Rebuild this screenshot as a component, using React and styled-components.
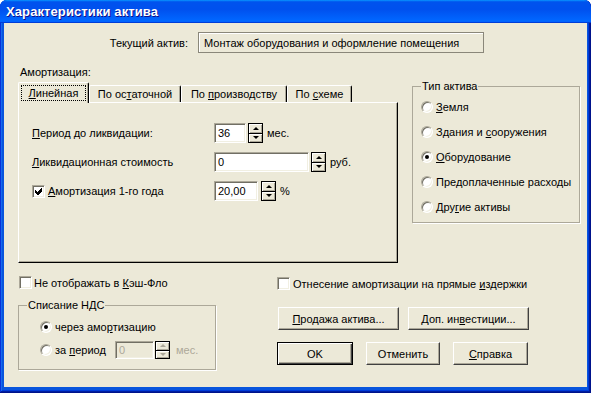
import React from 'react';
import styled, { createGlobalStyle, css } from 'styled-components';

const GlobalStyle = createGlobalStyle`
  html, body {
    margin: 0;
    padding: 0;
    background: #ffffff;
  }
  body {
    font-family: "Liberation Sans", Arial, sans-serif;
    font-size: 11px;
    color: #000;
  }
`;

const Window = styled.div`
  width: 591px;
  height: 393px;
  box-sizing: border-box;
  display: flex;
  flex-direction: column;
  border-radius: 7px 7px 0 0;
  overflow: hidden;
  background: #0855dd;
  box-shadow: inset -1px -1px #00138c, inset 1px 1px #0831d9,
    inset -2px -2px #001ea0, inset 2px 2px #166aee,
    inset -3px -3px #003bda, inset 3px 3px #0855dd;
`;

const TitleBar = styled.div`
  flex: none;
  height: 23px;
  display: flex;
  align-items: center;
  padding-left: 6px;
  background: linear-gradient(180deg, #0997ff, #0053ee 8%, #0050ee 40%, #0066ff 88%, #0066ff 93%, #005bff 95%, #003dd7 96%, #003dd7);
  color: #fff;
  font-size: 13px;
  font-weight: bold;
  letter-spacing: 0.1px;
  text-shadow: 1px 1px #0f1089;
`;

const Body = styled.div`
  flex: 1;
  margin: 0 4px 6px;
  background: #ece9d8;
  display: flex;
  flex-direction: column;
`;

const Key = styled.span`
  text-decoration: underline;
`;

const CurrentRow = styled.div`
  display: flex;
  align-items: center;
  gap: 10px;
  height: 21px;
  margin: 9px 0 0 104px;
`;

const CurrentLabel = styled.span`
  width: 80px;
  text-align: right;
`;

const ReadBox = styled.div`
  width: 286px;
  height: 21px;
  box-sizing: border-box;
  display: flex;
  align-items: center;
  padding-left: 5px;
  border: 1px solid #8a877a;
  box-shadow: inset 1px 1px #fff;
`;

const MainRow = styled.div`
  display: flex;
  gap: 14px;
  margin-left: 14px;
`;

const Column = styled.div`
  display: flex;
  flex-direction: column;
  width: ${p => p.$w}px;
  margin-left: ${p => p.$ml || 0}px;
`;

const SectionLabel = styled.div`
  line-height: 13px;
  margin: 13px 0 0 2px;
`;

const TabBar = styled.div`
  display: flex;
  align-items: flex-end;
  height: 20px;
  margin-top: 3px;
  position: relative;
  z-index: 1;
`;

const Tab = styled.div`
  box-sizing: border-box;
  width: ${p => p.$w}px;
  height: 17px;
  display: flex;
  align-items: center;
  justify-content: center;
  background: #ece9d8;
  border-left: 1px solid #fff;
  border-top: 1px solid #fff;
  border-right: 1px solid #000;
  border-radius: 2px 2px 0 0;
  box-shadow: inset -1px 0 #aca899;
  ${p => p.$active && css`
    height: 21px;
    margin-bottom: -1px;
    position: relative;
    z-index: 2;
  `}
`;

const Focus = styled.span`
  border: 1px dotted #000;
  padding: 1px 7px;
  line-height: 12px;
`;

const Panel = styled.div`
  box-sizing: border-box;
  width: 380px;
  height: 161px;
  border-left: 1px solid #fff;
  border-top: 1px solid #fff;
  border-right: 1px solid #000;
  border-bottom: 1px solid #000;
  box-shadow: inset -1px -1px #aca899;
  padding: 20px 0 0 13px;
`;

const FormGrid = styled.div`
  display: grid;
  grid-template-columns: 182px auto;
  grid-auto-rows: 20px;
  row-gap: 9px;
  align-items: center;
`;

const Controls = styled.div`
  display: flex;
  align-items: center;
  height: 20px;
`;

const Edit = styled.div`
  box-sizing: border-box;
  width: ${p => p.$w}px;
  height: ${p => p.$h || 20}px;
  display: flex;
  align-items: center;
  padding-left: 3px;
  background: ${p => (p.$disabled ? '#ece9d8' : '#fff')};
  color: ${p => (p.$disabled ? '#aca899' : '#000')};
  border: 1px solid;
  border-color: #aca899 #fff #fff #aca899;
  box-shadow: inset 1px 1px #716f64, inset -1px -1px #f1efe2;
`;

const Spin = styled.div`
  box-sizing: border-box;
  width: 15px;
  height: ${p => p.$h || 20}px;
  margin-left: ${p => p.$gap ?? 2}px;
  display: flex;
  flex-direction: column;
  border: 1px solid #000;
  background: #000;
  gap: 1px;
`;

const SpinButton = styled.div`
  flex: 1;
  display: flex;
  align-items: center;
  justify-content: center;
  background: #ece9d8;
  box-shadow: inset 1px 1px #fff, inset -1px -1px #aca899;
  &::after {
    content: '';
    width: 0;
    height: 0;
    border-left: 3px solid transparent;
    border-right: 3px solid transparent;
    ${p => (p.$down
      ? css`border-top: 3px solid ${p.$disabled ? '#aca899' : '#000'};`
      : css`border-bottom: 3px solid ${p.$disabled ? '#aca899' : '#000'};`)}
  }
`;

const Unit = styled.span`
  margin-left: ${p => p.$gap ?? 4}px;
  color: ${p => (p.$disabled ? '#aca899' : '#000')};
`;

const CheckRow = styled.label`
  display: flex;
  align-items: center;
  gap: ${p => p.$gap ?? 3}px;
  height: 13px;
  margin: ${p => p.$m || 0};
`;

const Box = styled.span`
  box-sizing: border-box;
  width: 13px;
  height: 13px;
  flex: none;
  display: flex;
  align-items: center;
  justify-content: center;
  background: #fff;
  border: 1px solid;
  border-color: #aca899 #fff #fff #aca899;
  box-shadow: inset 1px 1px #716f64, inset -1px -1px #f1efe2;
`;

const RadioDot = styled.span`
  box-sizing: border-box;
  width: 12px;
  height: 12px;
  flex: none;
  border-radius: 50%;
  display: flex;
  align-items: center;
  justify-content: center;
  background: #fff;
  border: 1px solid;
  border-color: #aca899 #fff #fff #aca899;
  box-shadow: inset 1px 1px #716f64, inset -1px -1px #f1efe2;
  &::after {
    content: '';
    width: 4px;
    height: 4px;
    border-radius: 50%;
    background: ${p => (p.$on ? '#000' : 'transparent')};
  }
`;

const Group = styled.fieldset`
  box-sizing: border-box;
  width: ${p => p.$w}px;
  height: ${p => p.$h}px;
  margin: ${p => p.$mt}px 0 0;
  padding: ${p => p.$pt}px 0 0 8px;
  border: 1px solid #aca899;
  box-shadow: 1px 1px 0 #fff;
  min-width: 0;
`;

const Legend = styled.legend`
  padding: 0 1px;
  line-height: 13px;
  background: #ece9d8;
`;

const OptionList = styled.div`
  display: flex;
  flex-direction: column;
  gap: ${p => p.$gap}px;
  margin-left: ${p => p.$ml || 0}px;
`;

const OptionRow = styled.div`
  display: flex;
  align-items: center;
  height: ${p => p.$h || 13}px;
`;

const Option = styled.label`
  display: flex;
  align-items: center;
  gap: 3px;
  width: ${p => (p.$w ? `${p.$w}px` : 'auto')};
`;

const ButtonRow = styled.div`
  display: flex;
  gap: ${p => p.$gap}px;
  margin: ${p => p.$m};
`;

const Button = styled.button`
  box-sizing: border-box;
  width: ${p => p.$w}px;
  height: 23px;
  padding: 0;
  font: inherit;
  color: #000;
  background: #ece9d8;
  border: 1px solid;
  border-color: #fff #404040 #404040 #fff;
  box-shadow: inset -1px -1px #aca899;
  ${p => p.$default && css`
    border: 1px solid #000;
    box-shadow: inset 1px 1px #fff, inset -1px -1px #404040, inset -2px -2px #aca899;
  `}
`;

const Check = () => (
  <svg width="7" height="7" viewBox="0 0 7 7" shapeRendering="crispEdges">
    <polygon points="0,2 2,4 6,0 7,0 7,3 3,7 2,7 0,5" fill="#000" />
  </svg>
);

const Spinner = ({ h, gap, disabled }) => (
  <Spin $h={h} $gap={gap}>
    <SpinButton $disabled={disabled} />
    <SpinButton $down $disabled={disabled} />
  </Spin>
);

const tabs = [
  { w: 71, label: <><Key>Л</Key>инейная</>, active: true },
  { w: 92, label: <>По ос<Key>т</Key>аточной</> },
  { w: 106, label: <>По <Key>п</Key>роизводству</> },
  { w: 65, label: <>По <Key>с</Key>хеме</> },
];

const assetTypes = [
  <><Key>З</Key>емля</>,
  <>Здания и <Key>с</Key>ооружения</>,
  <><Key>О</Key>борудование</>,
  <>Пре<Key>д</Key>оплаченные расходы</>,
  <>Дру<Key>г</Key>ие активы</>,
];

export default function App() {
  return (
    <>
      <GlobalStyle />
      <Window>
        <TitleBar>Характеристики актива</TitleBar>
        <Body>
          <CurrentRow>
            <CurrentLabel>Текущий актив:</CurrentLabel>
            <ReadBox>Монтаж оборудования и оформление помещения</ReadBox>
          </CurrentRow>

          <MainRow>
            <Column $w={380}>
              <SectionLabel>Амортизация:</SectionLabel>
              <TabBar>
                {tabs.map((t, i) => (
                  <Tab key={i} $w={t.w} $active={t.active}>
                    {t.active ? <Focus>{t.label}</Focus> : <span>{t.label}</span>}
                  </Tab>
                ))}
              </TabBar>
              <Panel>
                <FormGrid>
                  <span><Key>П</Key>ериод до ликвидации:</span>
                  <Controls>
                    <Edit $w={32}>36</Edit>
                    <Spinner />
                    <Unit>мес.</Unit>
                  </Controls>

                  <span><Key>Л</Key>иквидационная стоимость</span>
                  <Controls>
                    <Edit $w={95}>0</Edit>
                    <Spinner />
                    <Unit>руб.</Unit>
                  </Controls>

                  <CheckRow>
                    <Box><Check /></Box>
                    <span><Key>А</Key>мортизация 1-го года</span>
                  </CheckRow>
                  <Controls>
                    <Edit $w={44}>20,00</Edit>
                    <Spinner gap={3} />
                    <Unit>%</Unit>
                  </Controls>
                </FormGrid>
              </Panel>
            </Column>

            <Group $w={168} $h={143} $mt={27} $pt={7}>
              <Legend>Тип актива</Legend>
              <OptionList $gap={12}>
                {assetTypes.map((label, i) => (
                  <OptionRow key={i}>
                    <Option>
                      <RadioDot $on={i === 2} />
                      <span>{label}</span>
                    </Option>
                  </OptionRow>
                ))}
              </OptionList>
            </Group>
          </MainRow>

          <MainRow>
            <Column $w={198}>
              <CheckRow $gap={2} $m="13px 0 0 1px">
                <Box />
                <span>Не отображать в <Key>К</Key>эш-Фло</span>
              </CheckRow>
              <Group $w={198} $h={71} $mt={10} $pt={8}>
                <Legend>Списание НДС</Legend>
                <OptionList $gap={8} $ml={13}>
                  <OptionRow>
                    <Option>
                      <RadioDot $on />
                      <span>через амо<Key>р</Key>тизацию</span>
                    </Option>
                  </OptionRow>
                  <OptionRow $h={18}>
                    <Option $w={75}>
                      <RadioDot />
                      <span>за <Key>п</Key>ериод</span>
                    </Option>
                    <Edit $w={39} $h={18} $disabled>0</Edit>
                    <Spinner h={18} gap={1} disabled />
                    <Unit $gap={6} $disabled>мес.</Unit>
                  </OptionRow>
                </OptionList>
              </Group>
            </Column>

            <Column $w={260} $ml={47}>
              <CheckRow $m="14px 0 0 0">
                <Box />
                <span>Отнесение амортизации на прямые <Key>и</Key>здержки</span>
              </CheckRow>
              <ButtonRow $gap={9} $m="17px 0 0 1px">
                <Button $w={121}><Key>П</Key>родажа актива...</Button>
                <Button $w={121}>Доп. ин<Key>в</Key>естиции...</Button>
              </ButtonRow>
              <ButtonRow $gap={13} $m="12px 0 0 0">
                <Button $w={76} $default>OK</Button>
                <Button $w={74}>Отменить</Button>
                <Button $w={75}><Key>С</Key>правка</Button>
              </ButtonRow>
            </Column>
          </MainRow>
        </Body>
      </Window>
    </>
  );
}
